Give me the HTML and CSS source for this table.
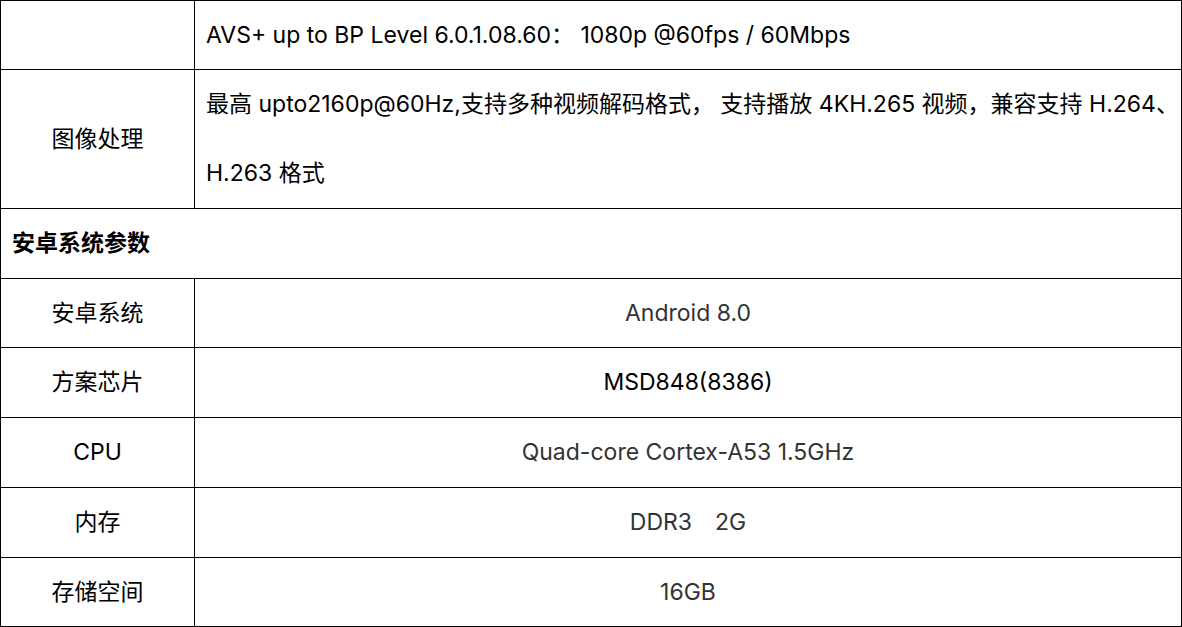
FILE: index.html
```html
<!DOCTYPE html>
<html lang="zh-CN">
<head>
<meta charset="utf-8">
<link rel="stylesheet" href="styles.css">
</head>
<body>
<table class="spec">
  <colgroup><col class="c-label"><col class="c-value"></colgroup>
  <tr class="short">
    <td class="label"></td>
    <td class="desc">AVS+ up to BP Level 6.0.1.08.60： 1080p @60fps / 60Mbps</td>
  </tr>
  <tr>
    <td class="label">图像处理</td>
    <td class="desc">最高 upto2160p@60Hz,支持多种视频解码格式， 支持播放 4KH.265 视频，兼容支持 H.264、<br>H.263 格式</td>
  </tr>
  <tr>
    <td class="section" colspan="2">安卓系统参数</td>
  </tr>
  <tr class="short">
    <td class="label">安卓系统</td>
    <td class="value grey">Android 8.0</td>
  </tr>
  <tr>
    <td class="label">方案芯片</td>
    <td class="value">MSD848(8386)</td>
  </tr>
  <tr>
    <td class="label">CPU</td>
    <td class="value grey">Quad-core Cortex-A53 1.5GHz</td>
  </tr>
  <tr>
    <td class="label">内存</td>
    <td class="value grey">DDR3　2G</td>
  </tr>
  <tr class="short">
    <td class="label">存储空间</td>
    <td class="value grey">16GB</td>
  </tr>
</table>
</body>
</html>
```

FILE: styles.css
```css
html, body {
  margin: 0;
  padding: 0;
  background: #fff;
}
.spec {
  border-collapse: collapse;
  width: 1182px;
  table-layout: fixed;
  font-family: "Inter", "Noto Sans CJK SC", sans-serif;
  font-size: 23px;
  color: #000;
}
.c-label { width: 194px; }
.spec td {
  border: 1px solid #000;
  padding: 0;
  height: 69px;
  line-height: 69px;
  vertical-align: middle;
  white-space: nowrap;
}
.spec .short td {
  height: 68px;
  line-height: 68px;
}
.spec .label {
  text-align: center;
}
.spec .desc {
  padding-left: 11px;
}
.spec .section {
  padding-left: 11px;
  font-weight: bold;
}
.spec .value {
  text-align: center;
}
.spec .grey {
  color: #333;
}
```
